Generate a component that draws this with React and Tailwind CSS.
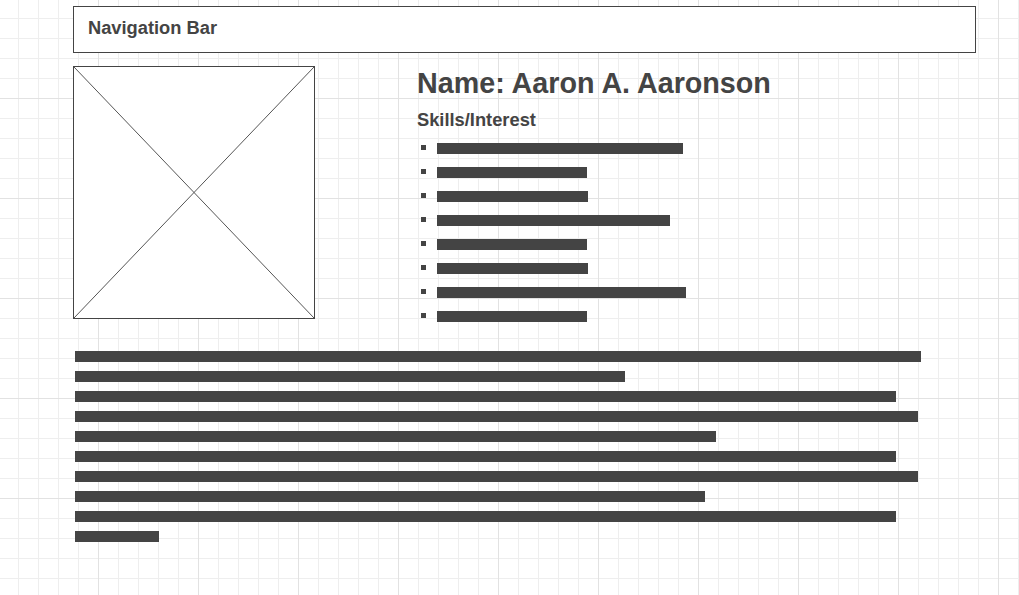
import React from 'react';

const skills = [246, 150, 151, 233, 150, 151, 249, 150];
const paragraph = [846, 550, 821, 843, 641, 821, 843, 630, 821, 84];

const ImagePlaceholder = () => (
  <div className="relative w-[242px] h-[253px] shrink-0 border border-[#444] bg-white">
    <svg className="absolute inset-0 w-full h-full" viewBox="0 0 100 100" preserveAspectRatio="none">
      <line x1="0" y1="0" x2="100" y2="100" stroke="#555" strokeWidth="1" vectorEffect="non-scaling-stroke" />
      <line x1="100" y1="0" x2="0" y2="100" stroke="#555" strokeWidth="1" vectorEffect="non-scaling-stroke" />
    </svg>
  </div>
);

const App = () => {
  return (
    <div
      className="min-h-screen h-[595px] overflow-hidden bg-white text-[#444] font-['Liberation_Sans',Arial,sans-serif] bg-[linear-gradient(to_right,#e2e2e2_1px,transparent_1px),linear-gradient(to_bottom,#e2e2e2_1px,transparent_1px),linear-gradient(to_right,#eeeeee_1px,transparent_1px),linear-gradient(to_bottom,#eeeeee_1px,transparent_1px)] [background-size:100px_100px,100px_100px,20px_20px,20px_20px] [background-position:98px_98px,98px_98px,18px_18px,18px_18px]"
    >
      <div className="pl-[73px] pt-[6px]">
        {/* Nav */}
        <header className="w-[903px] h-[47px] border border-[#444] bg-white flex items-center pl-[14px] pb-[3px]">
          <span className="text-[18.3px] font-bold leading-[22px]">Navigation Bar</span>
        </header>

        {/* Profile row */}
        <div className="flex items-start mt-[13px]">
          <ImagePlaceholder />
          <div className="ml-[102px] flex flex-col">
            <h1 className="mt-[1px] text-[28.7px] leading-[32px] font-bold">Name: Aaron A. Aaronson</h1>
            <h2 className="mt-[10px] text-[18.3px] leading-[22px] font-bold">Skills/Interest</h2>
            <ul className="mt-[12px] flex flex-col gap-[13px]">
              {skills.map((w, i) => (
                <li key={i} className="flex items-start h-[11px]">
                  <span className="ml-[4px] mt-[2px] w-[5px] h-[5px] bg-[#444]" />
                  <span className="ml-[11px] h-[11px] bg-[#444]" style={{ width: w }} />
                </li>
              ))}
            </ul>
          </div>
        </div>

        {/* Bio text */}
        <div className="mt-[29px] ml-[2px] flex flex-col gap-[9px]">
          {paragraph.map((w, i) => (
            <div key={i} className="h-[11px] bg-[#444]" style={{ width: w }} />
          ))}
        </div>
      </div>
    </div>
  );
};

export default App;
